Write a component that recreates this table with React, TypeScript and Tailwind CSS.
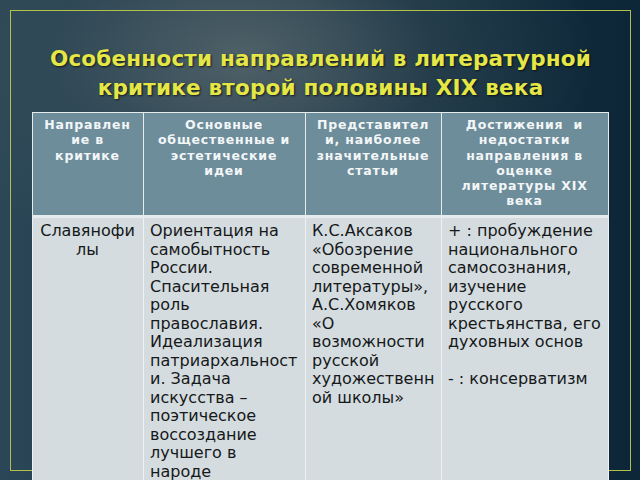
const head: string[][] = [
  ["Направлен", "ие в", "критике"],
  ["Основные", "общественные и", "эстетические", "идеи"],
  ["Представител", "и, наиболее", "значительные", "статьи"],
  ["Достижения  и", "недостатки", "направления в", "оценке", "литературы XIX", "века"],
];

const body: string[][] = [
  ["Славянофи", "лы"],
  [
    "Ориентация на",
    "самобытность",
    "России.",
    "Спасительная",
    "роль",
    "православия.",
    "Идеализация",
    "патриархальност",
    "и. Задача",
    "искусства –",
    "поэтическое",
    "воссоздание",
    "лучшего в",
    "народе",
  ],
  [
    "К.С.Аксаков",
    "«Обозрение",
    "современной",
    "литературы»,",
    "А.С.Хомяков",
    "«О",
    "возможности",
    "русской",
    "художественн",
    "ой школы»",
  ],
  [
    "+ : пробуждение",
    "национального",
    "самосознания,",
    "изучение",
    "русского",
    "крестьянства, его",
    "духовных основ",
    " ",
    "- : консерватизм",
  ],
];

function Lines({ lines }: { lines: string[] }) {
  return (
    <>
      {lines.map((l, i) => (
        <span key={i} className="block whitespace-pre">
          {l}
        </span>
      ))}
    </>
  );
}

export default function App() {
  return (
    <main
      className="relative w-[640px] h-[480px] overflow-hidden pt-[10px] pl-[10px] bg-[radial-gradient(ellipse_55%_45%_at_38%_12%,rgba(88,104,110,0.85)_0%,rgba(60,80,90,0.4)_55%,rgba(0,0,0,0)_100%),linear-gradient(90deg,#2b4757_0%,#1b3746_45%,#0c2638_100%)]"
      style={{ fontFamily: '"DejaVu Sans", "Noto Sans", sans-serif' }}
    >
      {/* рамка слайда */}
      <div className="w-[621px] h-[461px] border-[1.5px] border-[#b3c14c]">
        <h1 className="pt-[34px] text-center text-[21.5px] leading-[28.5px] font-bold tracking-[0.2px] text-[#e5e746] [text-shadow:1px_1px_2px_rgba(0,0,0,0.7)]">
          Особенности направлений в литературной
          <br />
          критике второй половины XIX века
        </h1>

        {/* таблица */}
        <table className="mt-[10px] ml-[20.5px] table-fixed border-collapse w-[576px]">
          <colgroup>
            <col className="w-[111px]" />
            <col className="w-[162px]" />
            <col className="w-[136px]" />
            <col className="w-[167px]" />
          </colgroup>
          <thead>
            <tr className="h-[104px] bg-[#6d8d9b]">
              {head.map((h, i) => (
                <th
                  key={i}
                  className="align-top pt-[4px] px-0 border border-b-[3px] border-[#e6ecee] text-center text-[12.5px] leading-[15.3px] font-bold tracking-[0.8px] text-[#f3f6f7]"
                >
                  <Lines lines={h} />
                </th>
              ))}
            </tr>
          </thead>
          <tbody>
            <tr className="h-[280px] bg-[#d4dce0]">
              {body.map((b, i) => (
                <td
                  key={i}
                  className={
                    "align-top pt-[4px] border border-[#eef2f3] text-[16px] leading-[18.5px] text-[#161819] " +
                    (i === 0 ? "text-center px-0" : "text-left pl-[6.5px] pr-0")
                  }
                >
                  <Lines lines={b} />
                </td>
              ))}
            </tr>
          </tbody>
        </table>
      </div>
    </main>
  );
}
